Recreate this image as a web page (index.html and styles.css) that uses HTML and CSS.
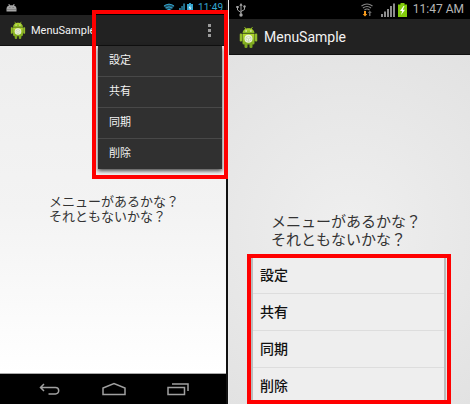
FILE: index.html
```
<!DOCTYPE html>
<html lang="ja">

<head>
    <meta charset="utf-8">
    <title>MenuSample</title>
    <link rel="stylesheet" href="styles.css">
</head>

<body>
    <!-- shared launcher icon -->
    <svg class="defs" width="0" height="0">
        <defs>
            <linearGradient id="green" x1="0" y1="0" x2="0" y2="1">
                <stop offset="0" stop-color="#b4d930" />
                <stop offset="1" stop-color="#7fae1e" />
            </linearGradient>
        </defs>
        <symbol id="droid" viewBox="0 0 18 22">
            <path d="M5 1l2 3M13 1l-2 3" stroke="#86b020" stroke-width="1" fill="none" />
            <path d="M3 7.500C3 0.500 15 0.500 15 7.500z" fill="url(#green)" />
            <path d="M3 8h12v9.200q0 1.300-1.300 1.300h-9.400q-1.300 0-1.300-1.300z" fill="url(#green)" />
            <rect x="0" y="7.500" width="2.700" height="8" rx="1.200" fill="#93bd2a" />
            <rect x="15.300" y="7.500" width="2.700" height="8" rx="1.200" fill="#93bd2a" />
            <rect x="5" y="16" width="3" height="6" rx="1.300" fill="#7fa820" />
            <rect x="10" y="16" width="3" height="6" rx="1.300" fill="#7fa820" />
            <circle cx="6.600" cy="5" r="0.700" fill="#fff" />
            <circle cx="11.400" cy="5" r="0.700" fill="#fff" />
            <circle cx="9" cy="12.800" r="4" fill="#f0f5e0" />
            <path d="M6.500 11.500L9 10.300l2.500 1.200L9 12.800zM9 12.800v3M6.500 11.500v2.700l2.500 1.500 2.500-1.500v-2.700" fill="none" stroke="#b9c99a" stroke-width="0.600" />
        </symbol>
    </svg>

    <main class="screens">
        <section class="phone nexus">
            <div class="statusBar">
                <svg class="notification" width="11" height="8" viewBox="0 0 11 8">
                    <path d="M0.500 7.500V5Q0.500 2 3 1.500L2.300 0h1l.7 1.200h3L7.700 0h1L8 1.500q2.500.5 2.500 3.500v2.500z" fill="#a5a5a5" />
                    <path d="M3 3.500h1.500M6.500 3.500H8M1 5.500h9" stroke="#777" stroke-width="0.700" />
                </svg>
                <svg width="12" height="9" viewBox="0 0 12 9">
                    <path d="M0.500 3Q6-1.300 11.500 3L6 9z" fill="#1c4f63" />
                    <path d="M1 3Q6-.6 11 3M2.700 5Q6 2.600 9.300 5" stroke="#33a4cd" fill="none" />
                    <path d="M4.300 6.300Q6 5.200 7.700 6.300L6 8.500z" fill="#33a4cd" />
                </svg>
                <svg width="8" height="9" viewBox="0 0 8 9">
                    <path d="M0 9V7h1.500v2zM2.200 9V5h1.500v4zM4.400 9V3h1.300v6zM6.300 9V0.500h1.500V9z" fill="#2f92b6" />
                </svg>
                <svg width="6" height="9" viewBox="0 0 6 9">
                    <path d="M0 1h2V0h2v1h2v8H0z" fill="#33a4cd" />
                    <path d="M3.500 2L1.500 5.300h1.300L2.500 8l2-3.500H3.200z" fill="#dff4fc" />
                </svg>
                <time class="clock">11:49</time>
            </div>
            <header class="actionBar">
                <svg class="appIcon" viewBox="0 0 18 22"><use href="#droid" /></svg>
                <h1 class="title">MenuSample</h1>
                <button class="overflow" aria-label="メニュー">
                    <svg width="3" height="13" viewBox="0 0 3 13">
                        <path d="M0 0h3v3H0zM0 5h3v3H0zM0 10h3v3H0z" fill="#9b9b9b" />
                    </svg>
                </button>
            </header>
            <div class="content">
                <p class="message">メニューがあるかな？<br>それともないかな？</p>
            </div>
            <nav class="navBar">
                <button aria-label="戻る">
                    <svg width="22" height="14" viewBox="0 0 22 14">
                        <path d="M5 2L1.500 5.500L5 9M1.500 5.500H16.500a3.200 3.200 0 0 1 0 6.400H9.500" />
                    </svg>
                </button>
                <button aria-label="ホーム">
                    <svg width="24" height="14" viewBox="0 0 24 14">
                        <path d="M1 12.500V6L12 1.500L23 6v6.500z" />
                    </svg>
                </button>
                <button aria-label="最近使ったアプリ">
                    <svg width="22" height="14" viewBox="0 0 22 14">
                        <path d="M1 5.500h16.500v7H1zM5 2h16v7" />
                    </svg>
                </button>
            </nav>
            <ul class="menu">
                <li><button>設定</button></li>
                <li><button>共有</button></li>
                <li><button>同期</button></li>
                <li><button>削除</button></li>
            </ul>
            <div class="highlight"></div>
        </section>

        <section class="phone galaxy">
            <div class="statusBar">
                <svg class="notification" width="10" height="14" viewBox="0 0 10 14">
                    <path d="M5 2v10M1.500 4v3L5 9.500M8.500 3v3.500L5 8.500" stroke="#a5a5a5" fill="none" />
                    <path d="M5 0L3.300 2.800h3.400zM0.300 3h2.400v2H0.300z" fill="#a5a5a5" />
                    <circle cx="8.500" cy="3.500" r="1.200" fill="#a5a5a5" />
                    <circle cx="5" cy="12" r="1.700" fill="#a5a5a5" />
                </svg>
                <svg class="wifi" width="12" height="14" viewBox="0 0 12 14">
                    <path d="M0.500 3Q6-1 11.500 3M2 5Q6 2 10 5M3.500 7Q6 5 8.500 7" stroke="#858585" stroke-width="1.200" fill="none" />
                    <path d="M3 8h2v3h1.300L4 13.500 1.700 11H3z" fill="#f79a1c" />
                    <path d="M8 13v-3H6.800L8.800 7.500 10.800 10H9.500v3z" fill="#666" />
                </svg>
                <svg width="14" height="14" viewBox="0 0 14 14">
                    <path d="M0 14v-3h2v3zM3 14V8.500h2V14zM6 14V6h2v8zM9 14V3h2v11zM12 14V0.500h2V14z" fill="#8c8c8c" />
                </svg>
                <svg width="9" height="14" viewBox="0 0 9 14">
                    <path d="M0 1.500h2.500V0h4v1.500H9V14H0z" fill="#83cc0b" />
                    <path d="M5.500 3L2 8h2.200L3 12l4-5.300H4.800L6.500 3z" fill="#fff" />
                </svg>
                <time class="clock">11:47 AM</time>
            </div>
            <header class="actionBar">
                <svg class="appIcon" viewBox="0 0 18 22"><use href="#droid" /></svg>
                <h1 class="title">MenuSample</h1>
            </header>
            <div class="content">
                <p class="message">メニューがあるかな？<br>それともないかな？</p>
            </div>
            <ul class="menu">
                <li><button>設定</button></li>
                <li><button>共有</button></li>
                <li><button>同期</button></li>
                <li><button>削除</button></li>
            </ul>
            <div class="highlight"></div>
        </section>
    </main>
</body>

</html>
```
FILE: styles.css
```
* {
    box-sizing: border-box;
}

body {
    margin: 0;
    background-color: #e8e8e8;
    font-family: Roboto, "Noto Sans CJK JP", sans-serif;
}

.defs {
    position: absolute;
}

.screens {
    display: grid;
    grid-template-columns: 228fr 241fr;
    gap: 1px;
    min-height: 100vh;
}

.phone {
    position: relative;
    display: flex;
    flex-direction: column;
}

.nexus {
    border-right: 2px solid #111;
}

.statusBar {
    display: flex;
    align-items: center;
    background-color: black;
}

.notification {
    margin-right: auto;
}

.actionBar {
    display: flex;
    align-items: center;
    background-color: #222;
    border-bottom: 1px solid #111;
}

.title {
    margin: 0;
    color: #f3f3f3;
    font-weight: normal;
}

.content {
    flex: 1;
}

.message {
    margin: 0;
    color: #333;
}

button {
    padding: 0;
    border: 0;
    background: none;
    color: inherit;
    font: inherit;
}

.menu {
    position: absolute;
    margin: 0;
    padding: 0;
    list-style: none;
}

.menu button {
    display: block;
    width: 100%;
    text-align: left;
}

.highlight {
    position: absolute;
    border: 4px solid red;
    pointer-events: none;
}

/* left phone */
.nexus .statusBar {
    height: 15px;
    gap: 2px;
    padding: 0 3px 0 6px;
}

.nexus .clock {
    margin-left: 3px;
    color: #33a4cd;
    font-size: 10px;
    line-height: 15px;
}

.nexus .actionBar {
    height: 31px;
    gap: 5px;
    padding: 0 15px 0 10px;
}

.nexus .appIcon {
    width: 16px;
    height: 18px;
}

.nexus .title {
    font-size: 11px;
}

.overflow {
    display: flex;
    margin-left: auto;
}

.nexus .content {
    padding: 148px 0 0 49px;
    background: linear-gradient(#eee, #f3f3f3 50%, #fff);
    border-bottom: 1px solid #aaa;
}

.nexus .message {
    font-size: 13px;
    line-height: 15px;
}

.navBar {
    display: flex;
    justify-content: space-between;
    align-items: center;
    height: 30px;
    padding: 0 37px 0 39px;
    background-color: black;
}

.navBar button {
    display: flex;
}

.navBar path {
    fill: none;
    stroke: #a0a0a0;
    stroke-width: 1.5;
}

.nexus .menu {
    top: 46px;
    right: 4px;
    width: 124px;
    background-color: #303030;
    box-shadow: 0 2px 4px rgba(0, 0, 0, 0.7);
    color: #f3f3f3;
}

.nexus .menu button {
    height: 30px;
    padding-left: 11px;
    font-size: 11px;
    line-height: 30px;
}

.nexus li + li {
    border-top: 1px solid #484848;
}

.nexus .highlight {
    top: 10px;
    right: -2px;
    width: 136px;
    height: 169px;
}

/* right phone */
.galaxy .statusBar {
    height: 19px;
    gap: 3px;
    padding: 0 6px 0 7px;
}

.galaxy .wifi {
    margin-right: 5px;
}

.galaxy .clock {
    margin-left: 3px;
    color: #b5b5b5;
    font-size: 12px;
    line-height: 19px;
}

.galaxy .actionBar {
    height: 36px;
    gap: 6px;
    padding-left: 10px;
}

.galaxy .appIcon {
    width: 19px;
    height: 22px;
}

.galaxy .title {
    font-size: 14px;
}

.galaxy .content {
    padding: 158px 0 0 42px;
    background: radial-gradient(circle at 50% 50%, #efefef, #e2e2e2);
}

.galaxy .message {
    font-size: 15px;
    line-height: 18px;
}

.galaxy .menu {
    right: 26px;
    bottom: 0;
    width: 191px;
    background-color: #eee;
    box-shadow: 0 0 0 2px #bbb;
    color: #111;
}

.galaxy .menu button {
    height: 36px;
    padding-left: 7px;
    font-size: 14px;
    font-weight: 500;
    line-height: 36px;
}

.galaxy li + li {
    border-top: 1px solid #ddd;
}

.galaxy .highlight {
    right: 19px;
    bottom: 0;
    width: 204px;
    height: 150px;
}
```
